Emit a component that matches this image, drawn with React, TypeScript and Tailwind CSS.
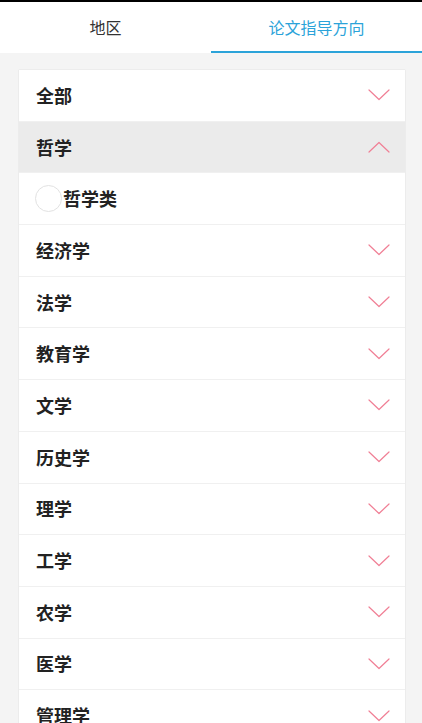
import React from "react";

type Item = { name: string; open?: boolean; children?: string[] };

const items: Item[] = [
  { name: "全部" },
  { name: "哲学", open: true, children: ["哲学类"] },
  { name: "经济学" },
  { name: "法学" },
  { name: "教育学" },
  { name: "文学" },
  { name: "历史学" },
  { name: "理学" },
  { name: "工学" },
  { name: "农学" },
  { name: "医学" },
  { name: "管理学" },
];

function Chevron({ up }: { up?: boolean }) {
  return (
    <svg width="22" height="12" viewBox="0 0 22 12" fill="none">
      <path
        d={up ? "M1 11 L11 1.5 L21 11" : "M1 1 L11 10.5 L21 1"}
        stroke="#f07f95"
        strokeWidth="1.2"
        strokeLinecap="round"
        strokeLinejoin="round"
      />
    </svg>
  );
}

export default function App() {
  return (
    <div
      className="w-[422px] h-[723px] overflow-hidden bg-[#f4f4f4] border-t-2 border-black"
      style={{ fontFamily: '"Noto Sans CJK SC", "Noto Sans", sans-serif' }}
    >
      <div className="flex h-[51px] bg-white">
        <div className="flex-1 flex items-center justify-center text-[16px] text-[#333] border-b-2 border-transparent">
          地区
        </div>
        <div className="flex-1 flex items-center justify-center text-[16px] text-[#2ba3d9] border-b-2 border-[#2ba3d9]">
          论文指导方向
        </div>
      </div>
      <div className="pl-[18px] pr-[16px] pt-[16px]">
        <div className="bg-white border border-[#ececec] rounded-[2px] flex flex-col">
          {items.map((it) => (
            <React.Fragment key={it.name}>
              <div
                className={`h-[51.7px] shrink-0 flex items-center justify-between pl-[17px] pr-[15px] border-b border-[#f0f0f0] ${
                  it.open ? "bg-[#ebebeb]" : "bg-white"
                }`}
              >
                <span className="text-[18px] font-bold text-[#222]">{it.name}</span>
                <Chevron up={it.open} />
              </div>
              {it.open &&
                it.children?.map((c) => (
                  <div
                    key={c}
                    className="h-[51.7px] shrink-0 flex items-center pl-[16px] border-b border-[#f0f0f0]"
                  >
                    <span className="w-[27px] h-[27px] rounded-full border border-[#e2e2e2] bg-white" />
                    <span className="ml-[1px] text-[18px] font-bold text-[#222]">{c}</span>
                  </div>
                ))}
            </React.Fragment>
          ))}
        </div>
      </div>
    </div>
  );
}
